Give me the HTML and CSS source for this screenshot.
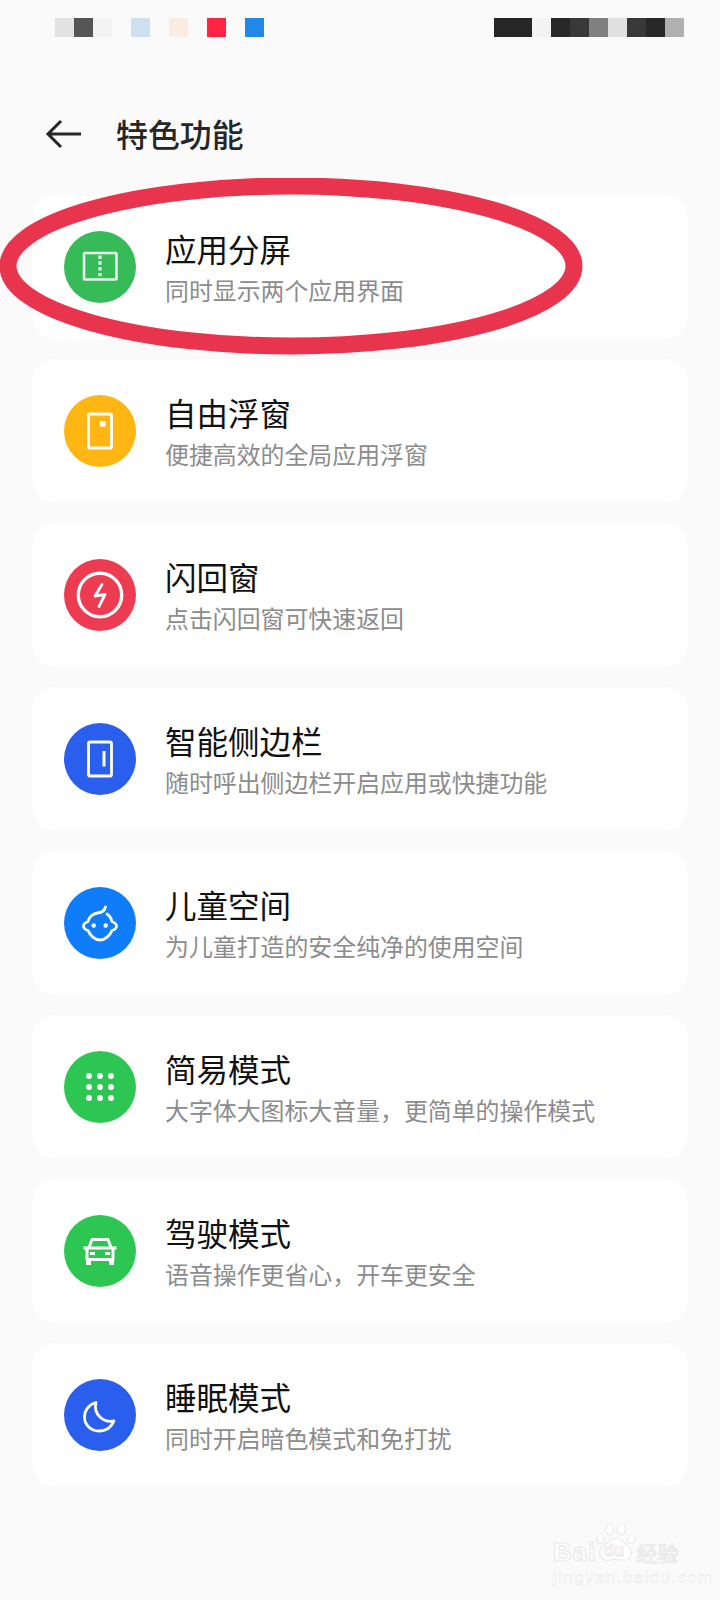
FILE: index.html
```html
<!DOCTYPE html>
<html lang="zh-CN">
<head>
<meta charset="utf-8">
<title>特色功能</title>
<link rel="stylesheet" href="styles.css">
</head>
<body>
<div class="page">
  <div class="status">
    <div class="cells left">
      <i class="c w1 g1"></i><i class="c w1 g2"></i><i class="c w1 g3"></i><i class="c w1 gap"></i>
      <i class="c w1 g4"></i><i class="c w1 gap"></i>
      <i class="c w1 g5"></i><i class="c w1 gap"></i>
      <i class="c w1 g6"></i><i class="c w1 gap"></i>
      <i class="c w1 g7"></i>
    </div>
    <div class="cells right">
      <i class="c w2 d1"></i><i class="c w1 d2"></i><i class="c w1 d3"></i><i class="c w1 d4"></i><i class="c w1 d5"></i><i class="c w1 d6"></i><i class="c w1 d4b"></i><i class="c w1 d3"></i><i class="c w1 d7"></i>
    </div>
  </div>

  <header class="header">
    <svg class="back" viewBox="0 0 38 30" width="38" height="30"><path d="M36 15H3M16 2 3 15l13 13" fill="none" stroke="#262626" stroke-width="3"/></svg>
    <h1 class="title">特色功能</h1>
  </header>

  <main class="list">
    <section class="card">
      <svg class="icon" viewBox="0 0 72 72"><circle cx="36" cy="36" r="36" fill="#37bb58"/><rect x="20" y="22" width="32.500" height="26.500" rx="1" fill="none" stroke="#e6f6ea" stroke-width="2.600"/><path d="M36 24.500v22" stroke="#e6f6ea" stroke-width="3.200" stroke-dasharray="3.400 2.400" fill="none"/></svg>
      <div class="text"><div class="name">应用分屏</div><div class="desc">同时显示两个应用界面</div></div>
    </section>
    <section class="card">
      <svg class="icon" viewBox="0 0 72 72"><circle cx="36" cy="36" r="36" fill="#ffb612"/><rect x="24.500" y="19" width="23" height="34" rx="1.500" fill="none" stroke="#fff" stroke-width="2.800"/><rect x="36" y="26" width="5.500" height="5.500" fill="#fff"/></svg>
      <div class="text"><div class="name">自由浮窗</div><div class="desc">便捷高效的全局应用浮窗</div></div>
    </section>
    <section class="card">
      <svg class="icon" viewBox="0 0 72 72"><circle cx="36" cy="36" r="36" fill="#ed3b52"/><circle cx="36" cy="36" r="21.700" fill="none" stroke="#fff" stroke-width="3.400"/><path d="M38 25.500 31 37l10-1.500L35 47.500" fill="none" stroke="#fff" stroke-width="2.800" stroke-linecap="round" stroke-linejoin="round"/></svg>
      <div class="text"><div class="name">闪回窗</div><div class="desc">点击闪回窗可快速返回</div></div>
    </section>
    <section class="card">
      <svg class="icon" viewBox="0 0 72 72"><circle cx="36" cy="36" r="36" fill="#2a5eec"/><rect x="24.500" y="19" width="23" height="34" rx="1.500" fill="none" stroke="#fff" stroke-width="2.800"/><rect x="38.500" y="28" width="3" height="15.500" fill="#fff"/></svg>
      <div class="text"><div class="name">智能侧边栏</div><div class="desc">随时呼出侧边栏开启应用或快捷功能</div></div>
    </section>
    <section class="card">
      <svg class="icon" viewBox="0 0 72 72"><circle cx="36" cy="36" r="36" fill="#0f7dfa"/><path d="M41.500 20c-1 3.500-3 5-6 5.500-7 1-10.500 4.500-11.500 9-2.500 1-4.500 2.500-4.500 4.500s2 4 4.500 4.500C26 48.500 31 53 36 53s10-4.500 12-9.500c2.500-.5 4.500-2.500 4.500-4.500s-2-3.500-4.500-4.500c-.8-3.500-2.500-6-5-7.500" fill="none" stroke="#fff" stroke-width="2.800" stroke-linecap="round" stroke-linejoin="round"/><circle cx="29.700" cy="38.500" r="2.200" fill="#fff"/><circle cx="41.700" cy="38.500" r="2.200" fill="#fff"/></svg>
      <div class="text"><div class="name">儿童空间</div><div class="desc">为儿童打造的安全纯净的使用空间</div></div>
    </section>
    <section class="card">
      <svg class="icon" viewBox="0 0 72 72"><circle cx="36" cy="36" r="36" fill="#2dc653"/><g fill="#fff"><circle cx="25" cy="25" r="2.900"/><circle cx="36" cy="25" r="2.900"/><circle cx="47" cy="25" r="2.900"/><circle cx="25" cy="36" r="2.900"/><circle cx="36" cy="36" r="2.900"/><circle cx="47" cy="36" r="2.900"/><circle cx="25" cy="47" r="2.900"/><circle cx="36" cy="47" r="2.900"/><circle cx="47" cy="47" r="2.900"/></g></svg>
      <div class="text"><div class="name">简易模式</div><div class="desc">大字体大图标大音量，更简单的操作模式</div></div>
    </section>
    <section class="card">
      <svg class="icon" viewBox="0 0 72 72"><circle cx="36" cy="36" r="36" fill="#2dc653"/><path d="M25 32.500 28 24.500h16L47 32.500M23 33h26v11.500h-26z" fill="none" stroke="#fff" stroke-width="3" stroke-linejoin="round"/><path d="M19.500 31.500h3.500v3h-3.500zM49 31.500h3.500v3H49z" fill="#fff"/><path d="M22 44h5v6h-5zM45 44h5v6h-5z" fill="#fff"/><rect x="26" y="37" width="5" height="3" fill="#fff"/><rect x="41" y="37" width="5" height="3" fill="#fff"/></svg>
      <div class="text"><div class="name">驾驶模式</div><div class="desc">语音操作更省心，开车更安全</div></div>
    </section>
    <section class="card">
      <svg class="icon" viewBox="0 0 72 72"><circle cx="36" cy="36" r="36" fill="#2a5eec"/><path d="M32 23.500C24.500 25.500 20.500 31.500 20.500 38c0 8 6.500 14 14.500 14 7 0 12.500-4 15-10-10.500 2-21-6.500-18-18.500z" fill="none" stroke="#fff" stroke-width="2.800" stroke-linejoin="round"/></svg>
      <div class="text"><div class="name">睡眠模式</div><div class="desc">同时开启暗色模式和免打扰</div></div>
    </section>
  </main>

  <svg class="mark" viewBox="0 0 590 180" width="590" height="180"><ellipse cx="291" cy="88" rx="283" ry="80" fill="none" stroke="#e9344e" stroke-width="17"/></svg>

  <div class="baidu">
    <div class="brand">
      <span class="bai">Bai</span>
      <span class="paw">
        <svg viewBox="0 0 44 52" width="40" height="42" preserveAspectRatio="none"><g fill="#fff" stroke="#e8e8e8" stroke-width="1.200"><ellipse cx="5" cy="21" rx="4" ry="6"/><ellipse cx="15" cy="9" rx="4.500" ry="7"/><ellipse cx="28" cy="9" rx="4.500" ry="7"/><ellipse cx="39" cy="21" rx="4" ry="6"/><path d="M22 20c6 0 8 6 13 10 6 5 5 15-2 17-5 1-7-1-11-1s-7 2-12 1C3 45 2 35 8 30c5-4 8-10 14-10z"/></g></svg>
        <span class="du">du</span>
      </span>
      <span class="jy">经验</span>
    </div>
    <div class="url">jingyan.baidu.com</div>
  </div>
</div>
</body>
</html>
```

FILE: styles.css
```css
* { box-sizing: border-box; }
html, body { margin: 0; padding: 0; }
body {
  background: #fafafa;
  font-family: "Noto Sans CJK SC", "Noto Sans", sans-serif;
}
.page { position: relative; width: 720px; height: 1600px; overflow: hidden; background: #fafafa; }

.status { display: flex; justify-content: space-between; padding: 18px 36px 0 55px; height: 37px; }
.cells { display: flex; }
.c { display: block; height: 19px; }
.w1 { width: 19px; }
.w2 { width: 38px; }
.gap { background: transparent; }
.g1 { background: #e1e1e1; }
.g2 { background: #555; }
.g3 { background: #f3f3f3; }
.g4 { background: #cde0f0; }
.g5 { background: #faece1; }
.g6 { background: #ff2442; }
.g7 { background: #2088e8; }
.d1 { background: #262626; }
.d2 { background: #f3f3f3; }
.d3 { background: #282828; }
.d4 { background: #383838; }
.d4b { background: #383838; }
.d5 { background: #808080; }
.d6 { background: #e0e0e0; }
.d7 { background: #b0b0b0; }

.header { display: flex; align-items: center; height: 60px; margin-top: 67px; padding-left: 45px; }
.back { flex: none; }
.title { margin: 0 0 3px 33px; font-size: 31.900px; line-height: 44px; font-weight: 500; color: #262626; }

.list { display: flex; flex-direction: column; gap: 20px; margin: 31px 32px 0; }
.card { display: flex; align-items: center; height: 144px; padding-left: 32px; background: #fff; border-radius: 24px; }
.icon { flex: none; width: 72px; height: 72px; }
.text { margin: 0 0 0 29px; }
.name { font-size: 31.500px; line-height: 44px; color: #111; }
.desc { margin-top: 2px; font-size: 23.900px; line-height: 36px; color: #8c8c8c; }

.mark { position: absolute; left: 0; top: 178px; }

.baidu { position: absolute; left: 553px; top: 1522px; width: 130px; }
.brand { display: flex; align-items: flex-end; height: 42px; }
.bai, .jy, .url, .du { color: #fff; -webkit-text-stroke: 1px #e8e8e8; }
.bai { flex: none; font-family: "Liberation Sans", sans-serif; font-size: 26px; line-height: 24px; font-weight: 700; letter-spacing: 1px; }
.paw { position: relative; flex: none; width: 40px; height: 42px; }
.paw svg { display: block; }
.du { position: absolute; left: 7px; bottom: 4px; font-family: "Liberation Sans", sans-serif; font-size: 17px; line-height: 18px; font-weight: 700; }
.jy { flex: none; font-size: 21px; line-height: 24px; white-space: nowrap; }
.url { margin-top: 5px; font-family: "Liberation Sans", sans-serif; font-size: 17px; line-height: 18px; letter-spacing: 1.400px; -webkit-text-stroke: .6px #ececec; white-space: nowrap; }
```
